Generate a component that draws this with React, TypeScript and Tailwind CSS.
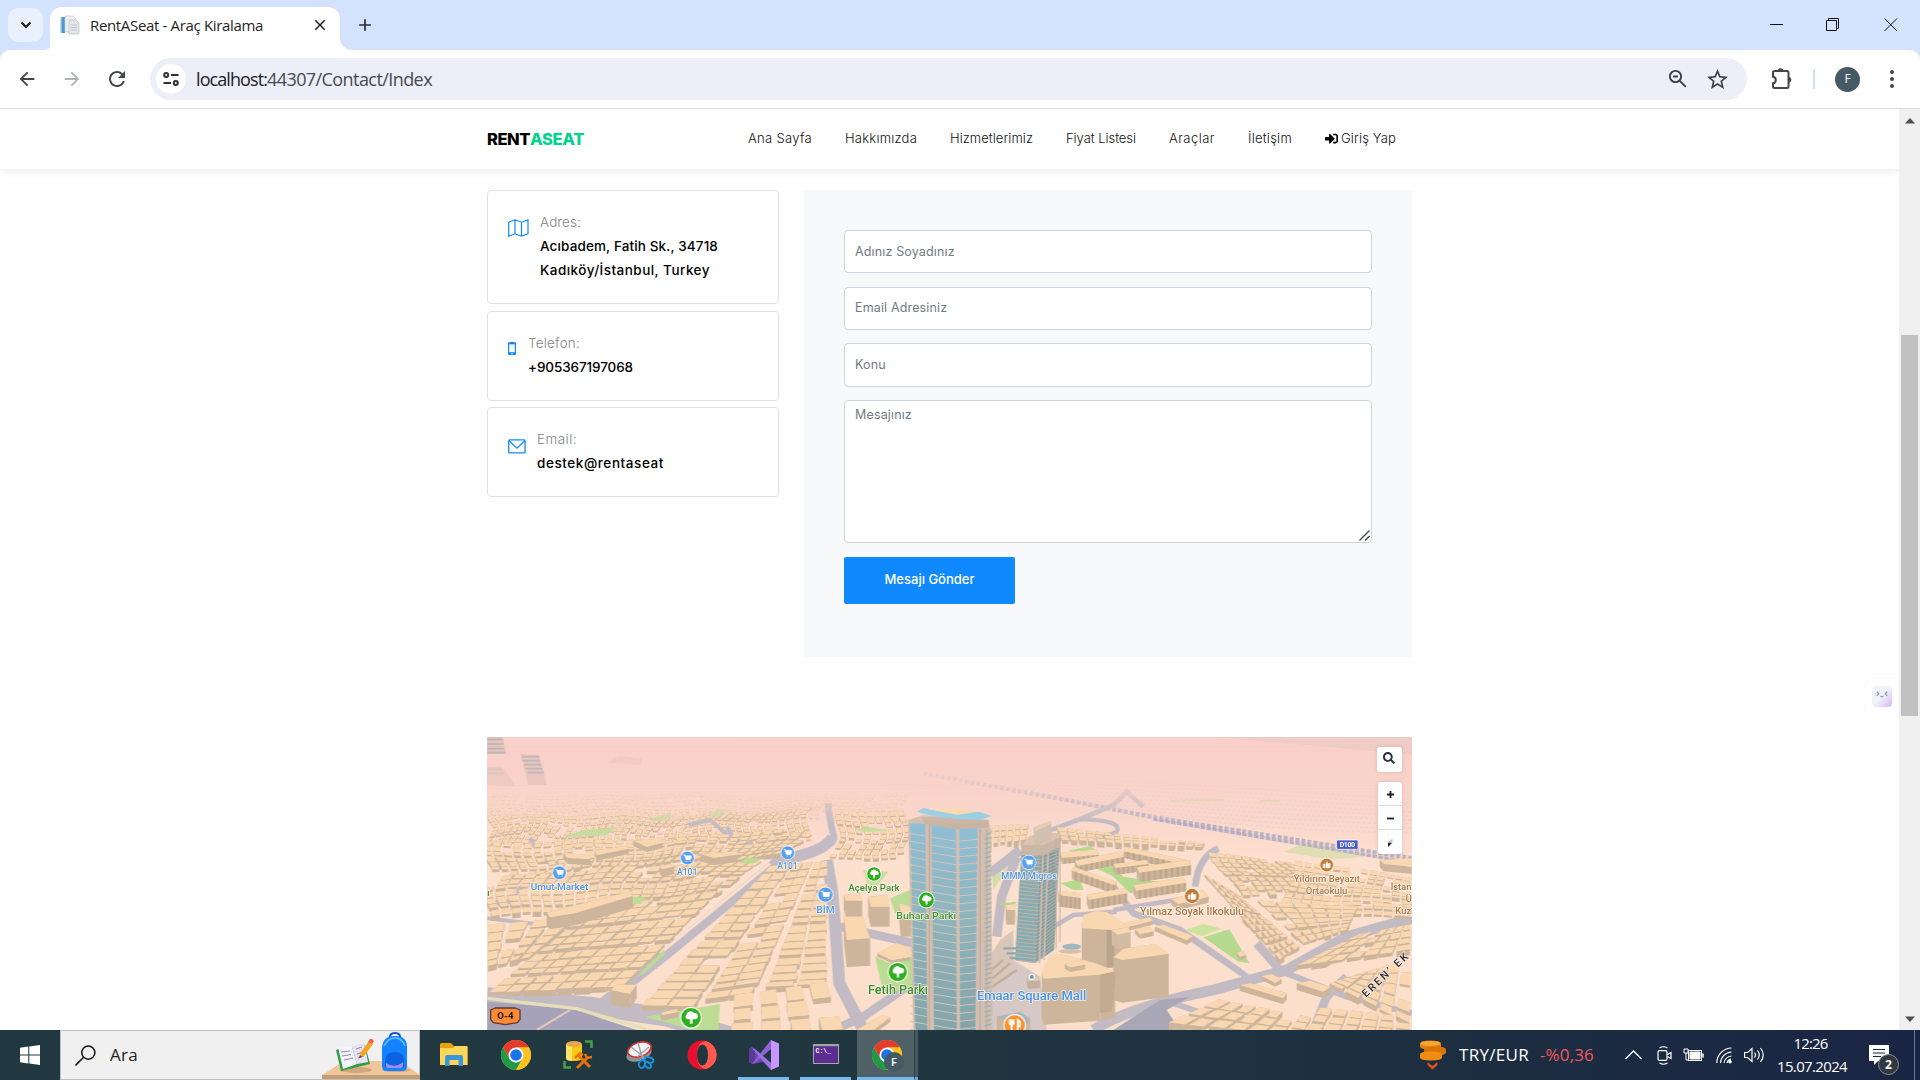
import React, { useLayoutEffect, useRef, useState } from "react";
import { MdArrowBack, MdArrowForward, MdRefresh, MdStarBorder, MdClose, MdAdd } from "react-icons/md";
import { FaSignInAlt, FaSearch } from "react-icons/fa";

const UI = "font-['Open_Sans','Noto_Sans',sans-serif]";

/** Single line of text whose tracking is tuned so that it fills exactly `w` pixels. */
function Fit({ w, className = "", children }: { w: number; className?: string; children: string }) {
  const ref = useRef<HTMLSpanElement>(null);
  const [ls, setLs] = useState(0);
  useLayoutEffect(() => {
    if (ref.current) setLs((w - ref.current.getBoundingClientRect().width) / children.length);
  }, [w, children]);
  return (
    <span ref={ref} className={"inline-block shrink-0 whitespace-pre " + className} style={{ letterSpacing: ls }}>
      {children}
    </span>
  );
}

/* ---------------------------------------------------------------- browser */

function TabStrip() {
  return (
    <div className="flex h-[50px] shrink-0 items-start bg-[#d3e2fd]">
      <div className="ml-2 mt-2 flex h-[34px] w-[35px] items-center justify-center rounded-[10px] bg-[#e9f0fe]">
        <svg width="12" height="8" viewBox="0 0 12 8" fill="none" stroke="#1c1c1c" strokeWidth="2.2">
          <path d="M1.500 1.500 6 6l4.500-4.500" />
        </svg>
      </div>
      <svg className="mt-[38px] w-[12px]" height="12" viewBox="0 0 12 12">
        <path d="M12 0v12H0A12 12 0 0 0 12 0Z" fill="#fff" />
      </svg>
      <div className={"-ml-[5px] mt-[7px] flex h-[43px] w-[290px] items-center rounded-t-[12px] bg-white pb-[7px] pl-[10px] " + UI}>
        <svg width="20" height="20" viewBox="0 0 20 20">
          <rect x="1" y="2" width="4" height="16" fill="#4a9ad4" />
          <rect x="0" y="2" width="1.5" height="16" fill="#cfd8df" />
          <path d="M5 1h8l3 3v13H5Z" fill="#eceff1" stroke="#c4cacf" strokeWidth=".7" />
          <path d="M9 5h7l3 3v11H9Z" fill="#e3e7ea" stroke="#bac1c6" strokeWidth=".7" />
          <path d="M11 10h6M11 12.500h6M11 15h6" stroke="#b4bbc0" strokeWidth=".8" />
        </svg>
        <Fit w={173} className="-mt-px ml-[10px] text-[15px] leading-5 text-[#1f1f1f]">RentASeat - Araç Kiralama</Fit>
        <MdClose className="ml-[48px] size-[18px] text-[#1f1f1f]" />
      </div>
      <svg className="mt-[38px]" width="12" height="12" viewBox="0 0 12 12">
        <path d="M0 0v12h12A12 12 0 0 1 0 0Z" fill="#fff" />
      </svg>
      <MdAdd className="ml-[3px] mt-[15px] size-[20px] text-[#2b2b2b]" />
      <div className="ml-auto flex items-center pr-[22px] pt-[18px]">
        <svg width="128" height="14" viewBox="0 0 128 14" fill="none" stroke="#111" strokeWidth="1">
          <path d="M0 6.500h13" />
          <path d="M56.500 2.500h10v10h-10ZM58.500 2.500v-2h10v10h-2" />
          <path d="M114.500.500l12.500 12.500M127 .500 114.500 13" />
        </svg>
      </div>
    </div>
  );
}

function Toolbar() {
  return (
    <div className="h-[59px] shrink-0 bg-[#d3e2fd]">
      <div className={"flex h-[59px] items-center rounded-t-[10px] border-b border-[#dcdde0] bg-white " + UI}>
        <MdArrowBack className="ml-[16px] size-[22px] text-[#454746]" />
        <MdArrowForward className="ml-[23px] size-[22px] text-[#b0b2b4]" />
        <MdRefresh className="ml-[22px] size-[24px] text-[#454746]" />
        <div className="ml-[21px] flex h-[42px] w-[1597px] items-center rounded-full bg-[#eceef8] pl-[6px]">
          <div className="flex size-[30px] items-center justify-center rounded-full bg-white">
            <svg width="16" height="14" viewBox="0 0 16 14" fill="none" stroke="#303134" strokeWidth="2">
              <circle cx="3.200" cy="3" r="2" />
              <path d="M8 3h7.500M.500 11H8" />
              <circle cx="12.800" cy="11" r="2" />
            </svg>
          </div>
          <div className="ml-[10px] flex text-[18px]">
            <Fit w={71} className="text-[#1f2023]">localhost:</Fit>
            <Fit w={165} className="text-[#474a4e]">44307/Contact/Index</Fit>
          </div>
          <svg className="ml-auto" width="20" height="20" viewBox="0 0 20 20" fill="none" stroke="#3c4043" strokeWidth="1.900">
            <circle cx="7.500" cy="7.500" r="5.600" />
            <path d="m11.800 11.800 6 6M5 7.500h5" />
          </svg>
          <MdStarBorder className="ml-[17px] mr-[17px] size-[25px] text-[#3c4043]" />
        </div>
        <svg className="ml-[23px]" width="24" height="24" viewBox="0 0 24 24">
          <path d="M3 5.500Q3 4 4.500 4H17q1.500 0 1.500 1.500v14q0 1.500-1.500 1.500H4.500Q3 21 3 19.500v-3.200c3.700-.4 3.700-6.200 0-6.600Z" fill="none" stroke="#454746" strokeWidth="2" />
          <path d="M7.800 4a2.700 2.700 0 0 1 5.400 0ZM18.500 10a2.700 2.700 0 0 1 0 5.600Z" fill="#454746" />
        </svg>
        <div className="ml-[19px] h-[20px] w-[2px] bg-[#cfe0fb]" />
        <div className="ml-[20px] flex size-[25px] items-center justify-center rounded-full bg-[#455a64] text-[12px] text-white">F</div>
        <svg className="ml-[29px]" width="6" height="20" viewBox="0 0 6 20" fill="#454746">
          <circle cx="3" cy="3" r="2" />
          <circle cx="3" cy="10" r="2" />
          <circle cx="3" cy="17" r="2" />
        </svg>
      </div>
    </div>
  );
}

/* ------------------------------------------------------------------- page */

function SiteHeader() {
  const item = "text-[13px] font-light text-[#111]";
  return (
    <header className="relative flex h-[60px] shrink-0 items-center bg-white pl-[487px] shadow-[0_0_10px_rgba(0,0,0,0.12)]">
      <Fit w={43} className="text-[16.500px] font-extrabold text-black">RENT</Fit>
      <Fit w={54} className="text-[16.500px] font-extrabold text-[#01d28e]">ASEAT</Fit>
      <nav className="ml-[164px] flex items-center gap-[33px]">
        <Fit w={64} className={item}>Ana Sayfa</Fit>
        <Fit w={72} className={item}>Hakkımızda</Fit>
        <Fit w={83} className={item}>Hizmetlerimiz</Fit>
        <Fit w={70} className={item}>Fiyat Listesi</Fit>
        <Fit w={46} className={item}>Araçlar</Fit>
        <Fit w={44} className={item}>İletişim</Fit>
        <span className="flex items-center gap-[3px]">
          <FaSignInAlt className="-mt-[2px] size-[13px] text-black" />
          <Fit w={55} className={item}>Giriş Yap</Fit>
        </span>
      </nav>
    </header>
  );
}

function MapIcon() {
  return (
    <svg width="21" height="18" viewBox="0 0 21 18" fill="none" stroke="#1089ff" strokeWidth="1.200">
      <path d="M.700 3.200 7 .800l6.500 2.400L20 .800v14L13.500 17.200 7 14.800.700 17.200ZM7 .800v14M13.500 3.200v14" />
    </svg>
  );
}

function PhoneIcon() {
  return (
    <svg className="mt-[2px]" width="8" height="14" viewBox="0 0 8 14">
      <rect x="0" y="0" width="8" height="13" rx="1.500" fill="#1089ff" />
      <rect x="1.200" y="2.400" width="5.600" height="7.800" fill="#fff" />
      <circle cx="4" cy="11.700" r=".700" fill="#fff" />
    </svg>
  );
}

function MailIcon() {
  return (
    <svg className="mt-[3px]" width="18" height="15" viewBox="0 0 18 15" fill="none" stroke="#1089ff" strokeWidth="1.300">
      <rect x=".700" y=".900" width="16.400" height="13" rx="1" />
      <path d="m1 1.800 7.900 7.400 8-7.400" />
    </svg>
  );
}

function InfoCard({ icon, gap, label, labelW, lines, height }: {
  icon: React.ReactNode; gap: string; label: string; labelW: number; lines: [string, number][]; height: string;
}) {
  return (
    <div className={"flex w-[292px] items-start rounded-[4px] border border-[#dee2e6] bg-white pl-5 pt-[19px] " + height}>
      <span className="mt-[9px] shrink-0">{icon}</span>
      <div className={"flex flex-col items-start text-[13.500px] leading-6 " + gap}>
        <Fit w={labelW} className="font-light text-[#858585]">{label}</Fit>
        {lines.map(([text, w]) => (
          <Fit key={text} w={w} className="font-medium text-black">{text}</Fit>
        ))}
      </div>
    </div>
  );
}

function ContactSection() {
  const field = "block w-[528px] rounded-[4px] border border-[#ced4da] bg-white px-[10px] text-[12.500px] tracking-[0.15px] text-[#495057] placeholder:text-[#737b83]";
  return (
    <section className="flex shrink-0 items-start pl-[487px] pt-[21px]">
      <div className="flex flex-col">
        <InfoCard icon={<MapIcon />} gap="ml-[11px]" height="h-[114px]" label="Adres:" labelW={41}
          lines={[["Acıbadem, Fatih Sk., 34718", 178], ["Kadıköy/İstanbul, Turkey", 170]]} />
        <div className="h-[7px]" />
        <InfoCard icon={<PhoneIcon />} gap="ml-[12px]" height="h-[90px]" label="Telefon:" labelW={52} lines={[["+905367197068", 105]]} />
        <div className="h-[6px]" />
        <InfoCard icon={<MailIcon />} gap="ml-[11px]" height="h-[90px]" label="Email:" labelW={40} lines={[["destek@rentaseat", 127]]} />
      </div>
      <form className="ml-[25px] h-[467px] w-[608px] bg-[#f8f9fb] pl-10 pt-10">
        <input className={field + " h-[43px]"} placeholder="Adınız Soyadınız" />
        <input className={field + " mt-[14px] h-[43px] pb-[2px]"} placeholder="Email Adresiniz" />
        <input className={field + " mt-[13px] h-[44px] pb-[2px]"} placeholder="Konu" />
        <div className="relative mt-[13px] w-[528px]">
          <textarea className={field + " h-[143px] resize-none pt-[5px]"} placeholder="Mesajınız" />
          <svg className="absolute bottom-[2px] right-[2px]" width="11" height="11" viewBox="0 0 11 11" stroke="#444" strokeWidth="1.400">
            <path d="M.500 10.500 10.500.500M6 10.500 10.500 6" />
          </svg>
        </div>
        <button type="button" className="mt-[14px] flex h-[47px] w-[171px] items-center justify-center rounded-[2px] bg-[#1089ff] pb-[2px] text-[13px] font-medium text-white">
          <Fit w={90}>Mesajı Gönder</Fit>
        </button>
      </form>
    </section>
  );
}

/* -------------------------------------------------------------------- map */

type P = [number, number];
const ROOF = "#f9d7b1";
const SIDE = "#cdb59b";
const ROAD = "#c3bbc3";
const pts = (p: P[]) => p.map(([x, y]) => x.toFixed(1) + "," + y.toFixed(1)).join(" ");

function noise(n: number) {
  const v = Math.sin(n * 127.1 + 11.7) * 43758.5453;
  return v - Math.floor(v);
}

/** Roof outline extruded downwards. */
function Block({ roof, h, top = ROOF, side = SIDE }: { roof: P[]; h: number; top?: string; side?: string }) {
  return (
    <g>
      {roof.map((a, i) => {
        const b = roof[(i + 1) % roof.length];
        return <polygon key={i} points={pts([a, b, [b[0], b[1] + h], [a[0], a[1] + h]])} fill={side} />;
      })}
      <polygon points={pts(roof)} fill={top} />
    </g>
  );
}

/** District of small houses laid on a bilinear grid between four corners. */
function District({ q, nu, nv, h, seed, opacity = 1, fill = 0.9, lane = 5, warp = 0 }: {
  q: [P, P, P, P]; nu: number; nv: number; h: number; seed: number; opacity?: number; fill?: number; lane?: number; warp?: number;
}) {
  const at = (u: number, v: number): P => {
    const x = (1 - v) * ((1 - u) * q[0][0] + u * q[1][0]) + v * ((1 - u) * q[3][0] + u * q[2][0]);
    const y = (1 - v) * ((1 - u) * q[0][1] + u * q[1][1]) + v * ((1 - u) * q[3][1] + u * q[2][1]);
    return [x + warp * 3 * Math.sin(y / 21 + x / 210), y + warp * (Math.sin(x / 47 + seed) + 0.7 * Math.sin(x / 113 + y / 30))];
  };
  const items: React.ReactNode[] = [];
  for (let j = 0; j < nv; j++) {
    for (let i = 0; i < nu; i++) {
      const k = seed + j * 61 + i * 7;
      if (noise(k) < (warp ? 0.1 : 0.04)) continue;
      const gv = lane && j % lane === lane - 1 ? 0.7 : 0.97;
      const u0 = (i + 0.02 + noise(k + 1) * 0.08) / nu;
      const u1 = (i + fill - noise(k + 2) * 0.1) / nu;
      const v0 = (j + 0.04 + noise(k + 3) * 0.12) / nv;
      const v1 = (j + gv - noise(k + 4) * 0.15) / nv;
      const hh = h * (0.6 + noise(k + 5) * 0.8) * (0.5 + (0.5 * (j + 1)) / nv);
      items.push(<Block key={k} roof={[at(u0, v0), at(u1, v0), at(u1, v1), at(u0, v1)]} h={hh} />);
    }
  }
  return <g opacity={opacity}>{items}</g>;
}

function Road({ d, w, c = ROAD }: { d: string; w: number; c?: string }) {
  return <path d={d} fill="none" stroke={c} strokeWidth={w} strokeLinejoin="round" />;
}

function Apartments({ from, to, depth, h, n }: { from: P; to: P; depth: P; h: number; n: number }) {
  return (
    <g>
      <Block roof={[from, to, [to[0] + depth[0], to[1] + depth[1]], [from[0] + depth[0], from[1] + depth[1]]]} h={h} />
      {Array.from({ length: n }, (_, i) => {
        const t = (i + 0.5) / n;
        const x = from[0] + depth[0] + (to[0] - from[0]) * t;
        const y = from[1] + depth[1] + (to[1] - from[1]) * t;
        return <rect key={i} x={x} y={y} width={(to[0] - from[0]) / n / 2.5} height={h} fill="#b9a085" opacity=".7" />;
      })}
    </g>
  );
}

function Pin({ x, y, r, color, kind }: { x: number; y: number; r: number; color: string; kind: "cart" | "tree" | "school" | "food" }) {
  return (
    <g transform={`translate(${x} ${y}) scale(${r / 20})`}>
      <circle r="22" fill="#fff" opacity=".85" />
      <circle r="19.500" fill={color} />
      {kind === "cart" && <path d="M-11-9h4l3 14H9L12-6H-6M-2 10h.1M8 10h.1" fill="#fff" stroke="#fff" strokeWidth="3" strokeLinecap="round" />}
      {kind === "tree" && <path d="M-2 12V3h-5a5 5 0 0 1-2-9A8 7 0 0 1 6-9a6 6 0 0 1 3 12H3v9Z" fill="#fff" />}
      {kind === "school" && <path d="M-11-4h5V9h-5ZM-4-2 0-11q4 0 3 6h8q2 1 0 3v9q-1 3-4 3H-4Z" fill="#fff" />}
      {kind === "food" && <path d="M-6-12v24M-10-12v8q0 3 4 3t4-3v-8M6 12V-11q6 4 4 13H6" fill="none" stroke="#fff" strokeWidth="3.500" />}
    </g>
  );
}

function Label({ x, y, w, size, color, children, weight = 500 }: {
  x: number; y: number; w: number; size: number; color: string; children: string; weight?: number;
}) {
  return (
    <text x={x} y={y} textLength={w} lengthAdjust="spacingAndGlyphs" fontSize={size} fontWeight={weight} fill={color}
      stroke="#fff3e8" strokeWidth="4" strokeLinejoin="round" paintOrder="stroke" fontFamily="Roboto, sans-serif">
      {children}
    </text>
  );
}

function MainTower() {
  return (
    <g>
      <polygon points="1284,270 1330,255 1525,272 1532,300 1538,900 1300,900" fill="#d2bfb1" />
      <polygon points="1290,280 1336,282 1342,900 1306,900" fill="url(#glass)" />
      <polygon points="1354,284 1428,294 1430,900 1362,900" fill="url(#glass)" />
      <polygon points="1438,294 1492,292 1486,900 1440,900" fill="url(#glass)" />
      {Array.from({ length: 28 }, (_, i) => {
        const y = 310 + i * 23.5;
        return <path key={i} d={`M1290 ${y}L1345 ${y + 10}L1430 ${y + 24}L1492 ${y + 18}`} fill="none" stroke="#d6c3b6" strokeWidth="3" />;
      })}
      <path d="M1500 296V900M1520 300V900M1348 280V900" stroke="#b9a698" strokeWidth="3" />
      {Array.from({ length: 42 }, (_, i) => (
        <path key={i} d={`M1514 ${314 + i * 14}l20-6`} stroke="#9fb2b6" strokeWidth="4" />
      ))}
      <polygon points="1322,262 1420,260 1528,270 1525,292 1430,298 1335,282" fill="#c9b4a4" />
    </g>
  );
}

function TowerCrown() {
  return (
    <g>
      <polygon points="1312,244 1330,234 1420,252 1400,266 1322,250" fill="#9ccfe2" />
      <polygon points="1395,250 1420,242 1500,246 1534,258 1500,270 1420,266" fill="#9ccfe2" />
      <polygon points="1340,236 1440,234 1490,246 1430,254" fill="#fbd9b3" />
    </g>
  );
}

function SecondTower() {
  return (
    <g>
      <polygon points="1625,345 1680,340 1665,700 1605,690" fill="#86adb4" />
      <polygon points="1680,335 1740,320 1722,660 1665,700" fill="#7f9fa5" />
      {Array.from({ length: 30 }, (_, i) => (
        <path key={i} d={`M${1622 - i * 0.5} ${372 + i * 11}L${1682 - i * 0.5} ${378 + i * 11}L${1738 - i * 0.6} ${358 + i * 10}`} fill="none" stroke="#c8b3a2" strokeWidth="3" />
      ))}
      <path d="M1690 330 1678 700M1706 320 1692 690" stroke="#d3bfae" strokeWidth="5" />
      <Block roof={[[1625, 345], [1650, 318], [1735, 308], [1740, 322], [1690, 345]]} h={30} side="#cbb7a7" top="#dbc3ae" />
      <Block roof={[[1662, 292], [1712, 272], [1714, 282], [1668, 304]]} h={44} side="#d2bfae" top="#e3cdb8" />
      <path d="M1728 325v330M1740 325v310" stroke="#c3ae9c" strokeWidth="3" />
    </g>
  );
}

function CityMap() {
  return (
    <svg className="block h-[293px] w-[925px]" viewBox="21 21 2775 879" preserveAspectRatio="none">
      <defs>
        <linearGradient id="ground" x1="0" y1="0" x2="0" y2="1">
          <stop offset="0" stopColor="#f8d0c9" />
          <stop offset=".25" stopColor="#fad6cb" />
          <stop offset=".45" stopColor="#fde1cf" />
          <stop offset="1" stopColor="#fbdfcb" />
        </linearGradient>
        <linearGradient id="haze" x1="0" y1="0" x2="0" y2="1">
          <stop offset="0" stopColor="#f8d0c9" stopOpacity=".97" />
          <stop offset=".5" stopColor="#f9d2c9" stopOpacity=".8" />
          <stop offset="1" stopColor="#fbd9cb" stopOpacity="0" />
        </linearGradient>
        <linearGradient id="glass" x1="0" y1="0" x2="0" y2="1">
          <stop offset="0" stopColor="#8fbfd6" />
          <stop offset=".45" stopColor="#8fb5be" />
          <stop offset="1" stopColor="#83a5aa" />
        </linearGradient>
      </defs>
      <rect x="21" y="21" width="2775" height="879" fill="url(#ground)" />

      {/* distant quarters */}
      <District q={[[21, 190], [1290, 195], [1290, 270], [21, 270]]} nu={70} nv={7} h={4} seed={3} opacity={0.5} warp={5} fill={0.7} />
      <District q={[[21, 262], [1010, 240], [980, 330], [21, 345]]} nu={46} nv={8} h={6} seed={90} opacity={0.9} fill={0.78} warp={6} lane={3} />
      <District q={[[1080, 240], [1284, 240], [1290, 390], [1060, 390]]} nu={9} nv={9} h={8} seed={190} fill={0.78} warp={4} lane={3} />
      <g stroke="#cabcc6" fill="none" opacity=".5" strokeWidth="2.500" strokeDasharray="9 7">
        {Array.from({ length: 9 }, (_, i) => (
          <path key={i} d={`M${1420 + i * 40} ${130 + i * 10}Q${2000 + i * 40} ${150 + i * 20} 2796 ${210 + i * 12}`} />
        ))}
        {Array.from({ length: 6 }, (_, i) => (
          <path key={i} d={`M1200 ${60 + i * 20}Q1260 ${100 + i * 12} 1500 ${110 + i * 14}`} opacity=".5" />
        ))}
      </g>

      {/* parks on the horizon */}
      <g fill="#c8dca0">
        <polygon points="248,322 310,300 410,294 380,316" />
        <polygon points="500,270 560,252 584,258 540,274" opacity=".8" />
        <polygon points="686,262 712,238 745,240 715,258" opacity=".8" />
        <polygon points="1125,300 1160,290 1235,302 1160,306" />
        <polygon points="2410,365 2460,345 2570,352 2660,380 2550,388" opacity=".55" />
        <polygon points="1535,420 1590,398 1560,450 1540,480" opacity=".8" />
      </g>

      {/* roads */}
      <Road d="M60 420V370M150 325 190 395 240 400M740 290 765 330 820 345M625 285 690 270 760 330" w={12} />
      <Road d="M21 520 90 515 140 450" w={14} />
      <Road d="M21 565 190 585 330 600" w={12} />
      <Road d="M1045 220Q1045 260 1062 320Q1040 365 960 382L830 376 770 372" w={20} />
      <Road d="M1058 320Q1040 365 900 390L560 670 330 850" w={34} />
      <Road d="M870 400 540 670" w={9} c="#fbdfcd" />
      <Road d="M1040 390 1056 480 1068 620 1078 760 1150 900" w={36} />
      <Road d="M21 800 330 828 560 862 760 920" w={56} />
      <Road d="M1060 900 1150 860 1310 750M1080 590 1300 640" w={26} />
      <polygon points="21,815 280,838 470,900 21,900" fill="#a5a2b9" />
      <path d="M21 805 290 836 500 898" fill="none" stroke="#e4dfb6" strokeWidth="10" />
      <path d="M170 900 270 840" stroke="#f2cdb4" strokeWidth="6" />
      <path d="M1330 130 1760 210 2010 260 2796 385" fill="none" stroke="#bdb2c4" strokeWidth="13" strokeDasharray="12 6" />
      <path d="M2020 268 2796 398" fill="none" stroke="#a8a5c3" strokeWidth="9" strokeDasharray="14 4" opacity=".8" />
      <Road d="M1700 305Q1800 270 1900 225L1945 180M1940 185 1990 230" w={14} />
      <Road d="M1800 268Q1930 270 1910 305L1860 325" w={13} />
      <Road d="M1530 430 1620 360M1550 620 1565 500 1610 380" w={28} />
      <Road d="M2215 355Q2155 380 2145 470M1900 470 1960 550 2100 600 2300 740" w={20} />
      <Road d="M1720 590 1780 555 1910 545M1900 540 2150 500" w={14} />
      <Road d="M1840 900Q1950 830 2200 780L2420 720 2600 620 2796 565" w={32} />
      <Road d="M2500 900 2540 800 2600 740M2400 720 2330 640" w={26} />
      <Road d="M2050 810 2260 880M2420 730 2600 800 2796 850" w={18} />
      <polygon points="1900,900 2040,810 2130,800 2060,840 2100,900" fill="#a9a6b6" />

      {/* housing */}
      <District q={[[21, 340], [1010, 300], [900, 372], [21, 440]]} nu={32} nv={7} h={10} seed={400} fill={0.82} lane={3} warp={5} />
      <District q={[[21, 440], [860, 385], [700, 500], [21, 560]]} nu={22} nv={7} h={12} seed={700} fill={0.88} lane={3} warp={4} />
      <District q={[[330, 530], [720, 480], [430, 770], [21, 790]]} nu={8} nv={11} h={15} seed={900} fill={0.97} lane={3} />
      <District q={[[21, 580], [300, 560], [140, 690], [21, 720]]} nu={4} nv={5} h={14} seed={1000} fill={0.86} />
      <District q={[[870, 405], [935, 400], [640, 830], [480, 830]]} nu={2} nv={17} h={14} seed={1200} fill={1.0} lane={9} />
      <District q={[[942, 400], [1000, 392], [820, 790], [668, 810]]} nu={2} nv={17} h={14} seed={1400} fill={1.0} lane={8} />
      <District q={[[1005, 395], [1042, 390], [1045, 770], [850, 780]]} nu={2} nv={16} h={14} seed={1600} fill={0.98} lane={4} />
      <District q={[[760, 790], [1060, 750], [1110, 900], [750, 920]]} nu={4} nv={3} h={22} seed={1800} fill={0.78} lane={0} />
      <g fill="#bcdc94">
        <polygon points="470,740 550,660 556,672 490,732" />
        <polygon points="495,860 720,822 715,900 640,900" />
        <polygon points="1185,680 1230,700 1295,680 1300,770 1210,790" />
        <polygon points="1230,505 1295,478 1295,545 1245,550" />
        <polygon points="455,500 500,500 480,522 460,520" />
        <polygon points="1150,420 1225,425 1190,470 1160,460" opacity=".8" />
        <polygon points="780,400 800,382 845,388 820,400" />
      </g>
      <Block roof={[[250, 368], [330, 376], [332, 388], [262, 384]]} h={18} />
      <Block roof={[[345, 362], [440, 348], [446, 356], [350, 376]]} h={16} />
      <Block roof={[[460, 332], [545, 326], [548, 338], [500, 350]]} h={16} />
      <Block roof={[[662, 372], [772, 364], [772, 374], [700, 384]]} h={22} />
      <Block roof={[[540, 408], [575, 402], [582, 410], [545, 418]]} h={22} />
      <Block roof={[[200, 548], [450, 484], [458, 498], [285, 550], [210, 562]]} h={36} />
      <Block roof={[[392, 780], [410, 764], [470, 764], [450, 792]]} h={42} />
      <Block roof={[[543, 848], [590, 836], [594, 846], [546, 856]]} h={16} />
      <Block roof={[[1092, 495], [1140, 490], [1146, 512], [1096, 512]]} h={48} />
      <Block roof={[[1165, 500], [1222, 495], [1228, 530], [1172, 530]]} h={60} />
      <Block roof={[[1092, 560], [1150, 560], [1160, 595], [1170, 625], [1100, 630]]} h={82} />
      <Block roof={[[1258, 520], [1292, 530], [1292, 560], [1262, 560]]} h={60} />
      <Block roof={[[1192, 670], [1250, 640], [1292, 655], [1290, 680], [1235, 690]]} h={10} />
      <Block roof={[[1130, 900], [1205, 855], [1230, 862], [1180, 900]]} h={14} />

      {/* estates right of the towers */}
      <District q={[[1520, 285], [1650, 280], [1640, 330], [1520, 345]]} nu={6} nv={3} h={16} seed={2000} fill={0.8} />
      <District q={[[1730, 290], [2180, 340], [2170, 352], [1745, 330]]} nu={16} nv={3} h={14} seed={2100} fill={0.82} />
      <g fill="#b5d98e">
        <polygon points="1765,362 1830,348 1850,362 1800,374" />
        <polygon points="1840,410 1900,400 1930,440 1960,445 2040,455 1950,490 1900,440" />
        <polygon points="1740,460 1800,448 1810,480 1780,480" />
        <polygon points="1560,520 1610,515 1600,530 1570,528" />
        <polygon points="2115,600 2170,582 2225,596 2165,618" fill="#cbe39c" />
        <polygon points="2170,622 2248,598 2308,700 2275,695" />
      </g>
      <Apartments from={[1740, 368]} to={[1850, 358]} depth={[6, 16]} h={18} n={8} />
      <Apartments from={[1785, 392]} to={[1925, 364]} depth={[8, 16]} h={20} n={9} />
      <Apartments from={[1935, 350]} to={[2130, 392]} depth={[-4, 14]} h={20} n={11} />
      <Apartments from={[1900, 402]} to={[2000, 390]} depth={[6, 12]} h={20} n={7} />
      <Apartments from={[1780, 410]} to={[1910, 455]} depth={[-4, 12]} h={26} n={8} />
      <Apartments from={[1970, 412]} to={[2125, 390]} depth={[8, 16]} h={28} n={9} />
      <Apartments from={[1960, 466]} to={[2110, 442]} depth={[8, 16]} h={26} n={9} />
      <Apartments from={[1735, 482]} to={[1800, 490]} depth={[2, 14]} h={34} n={5} />
      <Apartments from={[1820, 494]} to={[1935, 474]} depth={[6, 16]} h={28} n={7} />
      <Block roof={[[2075, 508], [2170, 480], [2185, 500], [2095, 522]]} h={18} />
      <Block roof={[[1930, 580], [2010, 562], [2018, 572], [1945, 590]]} h={12} />
      <Block roof={[[2025, 590], [2050, 584], [2140, 618], [2120, 630]]} h={14} />
      <Block roof={[[1965, 598], [2010, 590], [2020, 604], [1980, 612]]} h={14} />

      <District q={[[2180, 365], [2440, 395], [2560, 480], [2290, 500]]} nu={10} nv={9} h={9} seed={2300} fill={0.88} warp={2} />
      <District q={[[2170, 430], [2270, 490], [2460, 650], [2400, 690]]} nu={4} nv={12} h={13} seed={2500} fill={0.95} />
      <District q={[[2450, 390], [2796, 440], [2796, 560], [2400, 550]]} nu={13} nv={10} h={10} seed={2700} fill={0.9} warp={2} lane={3} />
      <District q={[[2330, 510], [2640, 530], [2600, 600], [2470, 640]]} nu={6} nv={7} h={11} seed={2900} fill={0.92} />
      <District q={[[2640, 610], [2796, 580], [2796, 660], [2440, 710]]} nu={7} nv={4} h={13} seed={3000} fill={0.9} />
      <District q={[[2640, 730], [2796, 680], [2796, 900], [2540, 760]]} nu={5} nv={5} h={16} seed={3100} fill={0.85} />
      <District q={[[2220, 805], [2500, 860], [2480, 920], [2060, 880]]} nu={7} nv={3} h={18} seed={3200} fill={0.84} lane={0} />
      <District q={[[2520, 830], [2796, 860], [2796, 920], [2480, 900]]} nu={6} nv={3} h={18} seed={3300} fill={0.84} lane={0} />
      <Block roof={[[2280, 765], [2310, 760], [2420, 790], [2410, 805]]} h={18} />
      <Block roof={[[2345, 738], [2375, 732], [2405, 748], [2385, 758]]} h={12} />
      <Block roof={[[2450, 760], [2490, 752], [2550, 772], [2530, 785]]} h={20} />
      <Block roof={[[2270, 668], [2290, 662], [2298, 674], [2280, 680]]} h={10} />
      <Block roof={[[2700, 390], [2796, 385], [2796, 410], [2710, 402]]} h={22} />

      {/* shade around the mall */}
      <polygon points="1510,760 1600,690 1680,740 1700,900 1510,900" fill="#d6c8c4" />
      <polygon points="1515,700 1560,630 1600,600 1600,700 1540,780" fill="#d8c6b6" />
      <path d="M1520 760 1590 700M1530 775 1610 720M1515 735 1570 690" stroke="#c2ae9d" strokeWidth="7" />
      <path d="M1570 655h50M1580 670h50M1590 684h30" stroke="#8fa9ae" strokeWidth="7" />
      <ellipse cx="1775" cy="650" rx="28" ry="9" fill="#9db6bf" />
      <ellipse cx="1770" cy="664" rx="34" ry="7" fill="#d6bfa9" />
      <Block roof={[[1577, 526], [1605, 522], [1605, 540], [1580, 540]]} h={44} />
      <Block roof={[[1550, 860], [1620, 846], [1650, 866], [1640, 890]]} h={40} top="#a8b6c4" />
      <Block roof={[[1640, 740], [1670, 736], [1680, 752], [1644, 754]]} h={22} side="#c4b09e" top="#dccab8" />
      <circle cx="1655" cy="741" r="9" fill="#fff" />
      <circle cx="1655" cy="741" r="6" fill="#6f93a5" />
      <SecondTower />
      <MainTower />
      <Block roof={[[1810, 555], [1850, 543], [1880, 546], [1910, 566], [1950, 592], [1895, 600], [1805, 595]]} h={114} />
      <path d="M1880 600h22v112h-22Z" fill="#b9a48c" />
      <Block roof={[[1895, 600], [1945, 592], [1952, 606], [1912, 614]]} h={44} side="#d3bca2" />
      <Block roof={[[1900, 682], [1930, 656], [2025, 642], [2066, 672], [1928, 690]]} h={128} />
      <Block roof={[[1686, 730], [1712, 672], [1740, 672], [1848, 700], [1905, 725], [1860, 734], [1690, 746]]} h={138} />
      <Block roof={[[1755, 702], [1800, 692], [1815, 704], [1770, 712]]} h={14} />
      <polygon points="1860,734 1908,724 1896,845 1860,848" fill="#c2ab90" />

      {/* haze over the horizon and distant high-rises */}
      <rect x="21" y="21" width="2775" height="260" fill="url(#haze)" />
      <path d="M2200 21H2796V75Q2500 45 2200 21Z" fill="#eccac4" opacity=".8" />
      <path d="M2070 212 2230 210M2340 213h60" stroke="#dcd7a8" strokeWidth="6" opacity=".6" />
      <g opacity=".75">
        <polygon points="120,72 176,74 200,165 145,165" fill="#e3c1ba" />
        <path d="M124 80h54M128 92h52M132 104h52M138 116h50M142 128h50" stroke="#a9b0b2" strokeWidth="5" />
        <polygon points="21,21 68,21 78,72 21,72" fill="#dfc0ba" />
        <path d="M21 28h48M21 42h50M21 56h52M21 68h56M21 118h44M21 130h50" stroke="#a5adb0" strokeWidth="5" />
        <polygon points="21,110 66,110 108,170 21,165" fill="#e6c3bb" opacity=".7" />
        <path d="M380 98 420 78 485 86 480 104Z" fill="#ecc6bd" opacity=".7" />
      </g>
      <TowerCrown />

      {/* labels */}
      <Pin x={238} y={428} r={20} color="#58a0ee" kind="cart" />
      <Label x={152} y={480} w={173} size={27} color="#4b96e6">Umut Market</Label>
      <Pin x={622} y={384} r={20} color="#58a0ee" kind="cart" />
      <Label x={591} y={434} w={61} size={26} color="#4b96e6">A101</Label>
      <Pin x={923} y={368} r={20} color="#58a0ee" kind="cart" />
      <Label x={892} y={416} w={61} size={25} color="#4b96e6">A101</Label>
      <Pin x={1036} y={494} r={22} color="#58a0ee" kind="cart" />
      <Label x={1009} y={549} w={55} size={29} color="#4b96e6">BİM</Label>
      <Pin x={1646} y={397} r={21} color="#58a0ee" kind="cart" />
      <Label x={1564} y={448} w={166} size={27} color="#4b96e6">MMM Migros</Label>
      <Pin x={1182} y={432} r={21} color="#2fae1f" kind="tree" />
      <Label x={1105} y={483} w={154} size={27} color="#37902c">Açelya Park</Label>
      <Pin x={1339} y={510} r={23} color="#2fae1f" kind="tree" />
      <Label x={1249} y={566} w={180} size={29} color="#37902c">Buhara Parkı</Label>
      <Pin x={1253} y={726} r={28} color="#2fae1f" kind="tree" />
      <Label x={1164} y={792} w={180} size={36} color="#37902c">Fetih Parkı</Label>
      <Pin x={633} y={863} r={30} color="#2fae1f" kind="tree" />
      <Label x={21} y={498} w={8} size={26} color="#37902c">ı</Label>
      <Pin x={2136} y={498} r={22} color="#c07a33" kind="school" />
      <Label x={1980} y={555} w={312} size={30} color="#a8784a">Yılmaz Soyak İlkokulu</Label>
      <Pin x={2540} y={405} r={20} color="#c07a33" kind="school" />
      <Label x={2441} y={455} w={199} size={27} color="#a8784a">Yıldırım Beyazıt</Label>
      <Label x={2477} y={491} w={125} size={27} color="#a8784a">Ortaokulu</Label>
      <Label x={2732} y={480} w={62} size={27} color="#a8784a">İstan</Label>
      <Label x={2777} y={515} w={18} size={27} color="#a8784a">Ü</Label>
      <Label x={2746} y={551} w={48} size={27} color="#a8784a">Kuz</Label>
      <Label x={1491} y={809} w={328} size={38} color="#4295ea">Emaar Square Mall</Label>
      <Pin x={1604} y={886} r={31} color="#ff9130" kind="food" />
      <text transform="translate(2658 803) rotate(-43)" textLength="176" fontSize="32" fontWeight="500" fill="#2b2b38" stroke="#fff3e8" strokeWidth="4" paintOrder="stroke" fontFamily="Roboto, sans-serif">EREN’ EK</text>

      <rect x="2570" y="330" width="64" height="28" rx="4" fill="#4759c4" stroke="#fff" strokeWidth="2" />
      <text x="2579" y="352" textLength="46" fontSize="21" fontWeight="700" fill="#fff" fontFamily="Roboto, sans-serif">D100</text>
      <path d="M32 840 46 834H106L120 840V868L112 878 76 884 40 878 32 868Z" fill="#ff8a35" stroke="#5b3b2b" strokeWidth="4" strokeLinejoin="round" />
      <text x="52" y="868" textLength="49" lengthAdjust="spacingAndGlyphs" fontSize="27" fontWeight="800" fill="#2a1c14" fontFamily="Roboto, sans-serif">O-4</text>
    </svg>
  );
}

function MapSection() {
  const cell = "flex h-[24px] w-6 items-center justify-center pt-px";
  return (
    <section className="relative ml-[487px] mt-[80px] h-[293px] w-[925px] shrink-0 overflow-hidden">
      <CityMap />
      <div className="absolute right-[10px] top-[10px] flex flex-col items-end gap-[10px] text-[#26303c]">
        <div className="flex size-[25px] items-center justify-center rounded-[3px] bg-white pb-[3px] pr-px shadow-[0_0_4px_rgba(0,0,0,0.12)]">
          <FaSearch className="size-[12px]" />
        </div>
        <div className="flex w-6 flex-col divide-y divide-[#ddd] rounded-[3px] bg-white shadow-[0_0_4px_rgba(0,0,0,0.12)]">
          <span className={cell}><svg width="7" height="7" viewBox="0 0 7 7" stroke="#222" strokeWidth="1.800"><path d="M0 3.500h7M3.500 0v7" /></svg></span>
          <span className={cell}><svg width="7" height="7" viewBox="0 0 7 7" stroke="#222" strokeWidth="1.800"><path d="M0 3.500h7" /></svg></span>
          <span className={cell}>
            <svg width="6" height="10" viewBox="0 0 6 10"><path d="M1 4 5.500.500V5Z" fill="#c4c4c4" /><path d="m1 4.500 4 .500-4 4Z" fill="#222" /></svg>
          </span>
        </div>
      </div>
    </section>
  );
}

function Scrollbar() {
  return (
    <div className="flex w-[21px] shrink-0 flex-col items-center bg-[#f0f0f0]">
      <svg className="mt-[9px]" width="10" height="6" viewBox="0 0 10 6"><path d="M5 0 10 5.500H0Z" fill="#505050" /></svg>
      <div className="mt-[211px] h-[381px] w-[17px] bg-[#c1c1c1]" />
      <svg className="mb-[8px] mt-auto" width="10" height="6" viewBox="0 0 10 6"><path d="M5 6 10 .500H0Z" fill="#505050" /></svg>
    </div>
  );
}

function AssistantBubble() {
  return (
    <div className="absolute left-[1865px] top-[570px] flex h-[35px] w-[34px] items-center rounded-l-[8px] bg-white pl-[7px] shadow-[0_0_2px_rgba(0,0,0,0.05)]">
      <div className="flex h-[21px] w-[20px] items-start justify-center rounded-[4px] bg-gradient-to-br from-[#f0f2fa] from-50% to-[#d6b4ee] pt-[5px]">
        <svg width="12" height="7" viewBox="0 0 12 7" fill="none" stroke="#9a9dac" strokeWidth="1.300">
          <path d="m.800.800 2 2-2 2M11.200.800l-2 2 2 2M4.500 5q1.500 1.500 3 0" />
        </svg>
      </div>
    </div>
  );
}

/* ---------------------------------------------------------------- taskbar */

function ChromeLogo({ size }: { size: string }) {
  return (
    <svg className={size} viewBox="0 0 48 48">
      <circle cx="24" cy="24" r="24" fill="#fcc31e" />
      <path d="M3.200 12A24 24 0 0 1 44.800 12H24L13.600 30Z" fill="#e33b2e" />
      <path d="M3.200 12A24 24 0 0 0 24 48L34.400 30 24 36 13.600 30Z" fill="#1f9a47" />
      <path d="M24 12H44.800A24 24 0 0 1 24 48L34.400 30Z" fill="#fcc31e" />
      <circle cx="24" cy="24" r="12" fill="#fff" />
      <circle cx="24" cy="24" r="9.300" fill="#1a73e8" />
    </svg>
  );
}

function DeskArt() {
  return (
    <svg className="-mr-px ml-auto self-end" width="98" height="47" viewBox="0 0 98 47">
      <path d="M0 43 22 29H78L98 43Z" fill="#efc69c" />
      <path d="M0 43h98v4H0Z" fill="#c49d73" />
      <ellipse cx="34" cy="38" rx="16" ry="3" fill="#d0a780" />
      <ellipse cx="74" cy="38" rx="14" ry="2" fill="#d0a780" />
      <path d="m14 18 5 21 29-7-5-19-26 4Z" fill="#2f9e44" />
      <path d="m16 15 14 0 5 17-14 5Z" fill="#f4f1fb" />
      <path d="m30 15 12-5 4 20-11 2Z" fill="#e6e2f4" />
      <path d="m19 20 9-1M20 24l9-1.500M22 28l9-2M34 17l6-2M35 22l6-2M36 26l6-2" stroke="#8d89a8" strokeWidth="1" />
      <path d="m37 26 2-6 8-11 4 3-8 11Z" fill="#f5a524" />
      <path d="m46 10 2-3q2-1 4 2l-2 3Z" fill="#f2604c" />
      <path d="m37 26 1-3 2 2Z" fill="#5a3b22" />
      <path d="M68 7q-1-6 5-6t5 6" fill="none" stroke="#0b57d0" strokeWidth="2" />
      <path d="M60 17q0-13 13-13t12 13v17q0 5-5 5H65q-5 0-5-5Z" fill="#1283ff" />
      <path d="M62 14q4-8 11-8t10 8" fill="none" stroke="#66c2ff" strokeWidth="1.500" />
      <path d="M63 29q0-9 10-9t9 9v5q0 2-2 2H65q-2 0-2-2Z" fill="#0b63e0" />
      <path d="M64 31q9 6 17-1v4q0 2-2 2H66q-2 0-2-2Z" fill="#a78bfa" />
    </svg>
  );
}

function Taskbar() {
  const slot = "flex h-[50px] w-[51px] items-center justify-center";
  return (
    <footer className={"flex h-[50px] shrink-0 items-center bg-gradient-to-r from-[#213840] from-40% via-[#1d3040] via-70% to-[#1a2543] " + UI}>
      <svg className="ml-5" width="20" height="20" viewBox="0 0 20 20" fill="#fff">
        <path d="M0 2.800 8.300 1.600V9.500H0ZM9.300 1.450 20 0V9.500H9.300ZM0 10.500H8.300v7.900L0 17.200ZM9.300 10.500H20V20L9.300 18.550Z" />
      </svg>
      <div className="ml-5 flex h-[50px] w-[360px] items-center border border-[#bfc0c0] bg-[#f0f0f0] pl-[14px]">
        <svg width="21" height="21" viewBox="0 0 21 21" fill="none" stroke="#111" strokeWidth="1.500">
          <circle cx="13.300" cy="7.600" r="6.600" />
          <path d="M8.600 12.300.500 20.400" />
        </svg>
        <Fit w={28} className="ml-[14px] text-[17px] text-[#222]">Ara</Fit>
        <DeskArt />
      </div>
      <div className="ml-[8px] flex items-center gap-[11px]">
        <span className={slot}>
          <svg width="28" height="24" viewBox="0 0 28 24">
            <path d="M0 1.500Q0 0 1.500 0H11l3 3H26q1.500 0 1.500 1.500V22H0Z" fill="#e5a50a" />
            <path d="M0 5h13l2-2h12q.500 0 .500 1v18H0Z" fill="#ffd55a" />
            <path d="M5 23V14q0-2 2-2h14q2 0 2 2v9h-4.500v-6h-9v6Z" fill="#3b96dc" />
          </svg>
        </span>
        <span className={slot}><ChromeLogo size="size-[30px]" /></span>
        <span className={slot}>
          <svg width="30" height="30" viewBox="0 0 30 30">
            <path d="M3 4v14q0 3 8 3t8-3V4Z" fill="#f6c914" />
            <path d="M3 4v14q0 3 6 3V6Z" fill="#fbe26a" />
            <ellipse cx="11" cy="4" rx="8" ry="3" fill="#eba450" />
            <path d="M22 1.500h6.500V8M1.500 21v6.500H8" fill="none" stroke="#43a047" strokeWidth="2.600" />
            <path d="m14 28 11-11M15 15l12 12" stroke="#e8730c" strokeWidth="3" />
            <path d="m12 18 5-5 3 2M22 14l2 4 5-1" fill="none" stroke="#e8730c" strokeWidth="2.500" />
          </svg>
        </span>
        <span className={slot}>
          <svg width="30" height="30" viewBox="0 0 30 30">
            <ellipse cx="14" cy="14" rx="13" ry="7" transform="rotate(-18 14 14)" fill="#8d9499" />
            <ellipse cx="14.500" cy="9.500" rx="12" ry="7" transform="rotate(-18 14.500 9.500)" fill="#f3f4f5" stroke="#d8322e" strokeWidth="1.600" />
            <path d="M13 3l5 17M24 7 12 17M6 7l13 10" stroke="#9aa1a6" strokeWidth="1.300" />
            <ellipse cx="17" cy="24" rx="3" ry="4" transform="rotate(20 17 24)" fill="none" stroke="#1d8fd6" strokeWidth="2" />
            <ellipse cx="24" cy="20" rx="4.500" ry="2.600" transform="rotate(15 24 20)" fill="none" stroke="#1d8fd6" strokeWidth="2" />
            <ellipse cx="23" cy="25" rx="2.500" ry="3.500" transform="rotate(-45 23 25)" fill="none" stroke="#1d8fd6" strokeWidth="2" />
          </svg>
        </span>
        <span className={slot}>
          <svg width="30" height="30" viewBox="0 0 30 30">
            <ellipse cx="15" cy="15" rx="14.500" ry="14.500" fill="#e8112d" />
            <path d="M19 1A14.500 14.500 0 0 1 19 29Q10 28 10 15T19 1Z" fill="#ff5a50" />
            <ellipse cx="15.500" cy="15" rx="5.500" ry="10.500" fill="#20363e" />
          </svg>
        </span>
        <span className={slot + " border-b-[3px] border-[#76b9ed] pt-[3px]"}>
          <svg width="30" height="30" viewBox="0 0 30 30">
            <path d="M0 9 3 7 22 23V30L14 22 4 24 0 22Z" fill="#6c4bb0" />
            <path d="M0 9 3 7.500 6 9v12l-3 3-3-2Z" fill="#5b3a9c" />
            <path d="M3 24 22 0v9L6 22.500Z" fill="#8f63d6" />
            <path d="M6 9 22 23v7L3 8Z" fill="#9d73e2" />
            <path d="M22 0l8 3.500v23L22 30Z" fill="#c896ff" />
          </svg>
        </span>
        <span className={slot + " border-b-[3px] border-[#76b9ed]"}>
          <svg width="26" height="20" viewBox="0 0 26 20">
            <rect x=".500" y=".500" width="25" height="19" fill="#5c2d91" stroke="#a8a8a8" />
            <path d="M1 1.500h24" stroke="#9d9d9d" strokeWidth="1.500" />
            <text x="2.500" y="9" fontSize="6.500" fontWeight="700" fill="#fff" fontFamily="Liberation Mono, monospace">C:\_</text>
          </svg>
        </span>
        <span className="-ml-[5px] flex h-[50px] w-[61px]">
          <span className="relative flex w-[57px] items-center justify-center border-b-[3px] border-[#76b9ed] bg-[#506067] pl-[3px] pt-[3px]">
            <ChromeLogo size="size-[30px]" />
            <span className="absolute left-[27px] top-[22px] flex size-[20px] items-center justify-center rounded-full bg-[#455a64] text-[11px] font-semibold text-white">F</span>
          </span>
          <span className="w-[4px] border-b-[3px] border-l border-b-[#6aa5d4] border-l-[#2c4047] bg-[#45565e]" />
        </span>
      </div>

      <div className="ml-auto flex items-center">
        <svg width="28" height="30" viewBox="0 0 28 30">
          <path d="M1 3.500q0-3 10.500-3t10.500 3v3q0 3-10.500 3T1 6.500Z" fill="#e0820f" />
          <path d="M5 9.500q0-3 11-3t11 3v3q0 3-11 3t-11-3Z" fill="#d9740a" />
          <path d="M1 14.500q0-3 11-3t11 3v3q0 3-11 3t-11-3Z" fill="#f08c12" />
          <ellipse cx="11.500" cy="3.500" rx="10" ry="2.600" fill="#f9a633" />
          <path d="m8.500 22 5 4 5-4v3l-5 4.500-5-4.500Z" fill="#e2501c" />
        </svg>
        <Fit w={70} className="ml-[12px] text-[17px] text-white">TRY/EUR</Fit>
        <Fit w={54} className="ml-[11px] text-[17px] text-[#f2575f]">-%0,36</Fit>
        <svg className="ml-[31px]" width="17" height="10" viewBox="0 0 17 10" fill="none" stroke="#fff" strokeWidth="1.300"><path d="m.500 9 8-8 8 8" /></svg>
        <svg className="ml-[15px]" width="16" height="19" viewBox="0 0 16 19" fill="none" stroke="#fff" strokeWidth="1.200">
          <rect x="1" y="4.600" width="9" height="9.800" rx="1.500" />
          <path d="m10.500 8.500 3.500-2v6l-3.500-2M2.500 2q4-2.500 8 0M2.500 17q4 2.500 8 0" />
        </svg>
        <svg className="ml-[10px]" width="21" height="15" viewBox="0 0 21 15" fill="none" stroke="#fff">
          <path d="M1 1v4h4V1M2 0v2M4 0v2M3 5v7h2" />
          <rect x="5.500" y="2.500" width="13" height="10" />
          <path d="M7 4h10v7H7Z" fill="#fff" />
          <path d="M20 5.500v4" strokeWidth="1.500" />
        </svg>
        <svg className="ml-[12px]" width="17" height="17" viewBox="0 0 17 17" fill="none" stroke="#fff" strokeWidth="1.100">
          <path d="M.800 16A15 15 0 0 1 15.500 1M4.500 16A11.500 11.500 0 0 1 15.500 5M8 16a8 8 0 0 1 7.500-7M11 16a5 5 0 0 1 4-4" />
          <circle cx="14" cy="14.800" r="1.200" fill="#fff" />
        </svg>
        <svg className="ml-[11px]" width="21" height="16" viewBox="0 0 21 16" fill="none" stroke="#fff" strokeWidth="1.200">
          <path d="M.600 5.500h3L8 1.500v13L3.600 10.500h-3ZM10.500 5.500q2 2.500 0 5M13.500 3.500q3.500 4.500 0 9M16.500 1q5.500 7 0 14" />
        </svg>
        <div className="ml-[12px] flex w-[70px] flex-col items-center text-[15px] leading-[23px] text-white">
          <Fit w={34} className="-ml-[3px]">12:26</Fit>
          <Fit w={70}>15.07.2024</Fit>
        </div>
        <div className="relative ml-[22px] h-[50px] w-[34px]">
          <svg className="mt-[15px]" width="20" height="20" viewBox="0 0 20 20">
            <path d="M0 0h20v16H9l-4 4v-4H0Z" fill="#fff" />
            <path d="M4 4.500h12M4 8h12M4 11.500h8" stroke="#1b2a42" strokeWidth="1.200" />
          </svg>
          <span className="absolute left-[9px] top-[24px] flex size-[21px] items-center justify-center rounded-full border border-[#8a8f96] bg-[#32383f] text-[12px] font-bold leading-none text-white">2</span>
        </div>
        <div className="ml-[11px] mr-[5px] h-[50px] w-px bg-[#6c7588]" />
      </div>
    </footer>
  );
}

export default function App() {
  return (
    <div className="flex h-[1080px] w-[1920px] flex-col overflow-hidden bg-white font-['Inter','Noto_Sans',sans-serif]">
      <TabStrip />
      <Toolbar />
      <div className="relative flex h-[921px] shrink-0">
        <main className="flex w-[1899px] flex-col overflow-hidden">
          <SiteHeader />
          <ContactSection />
          <MapSection />
        </main>
        <Scrollbar />
        <AssistantBubble />
      </div>
      <Taskbar />
    </div>
  );
}
